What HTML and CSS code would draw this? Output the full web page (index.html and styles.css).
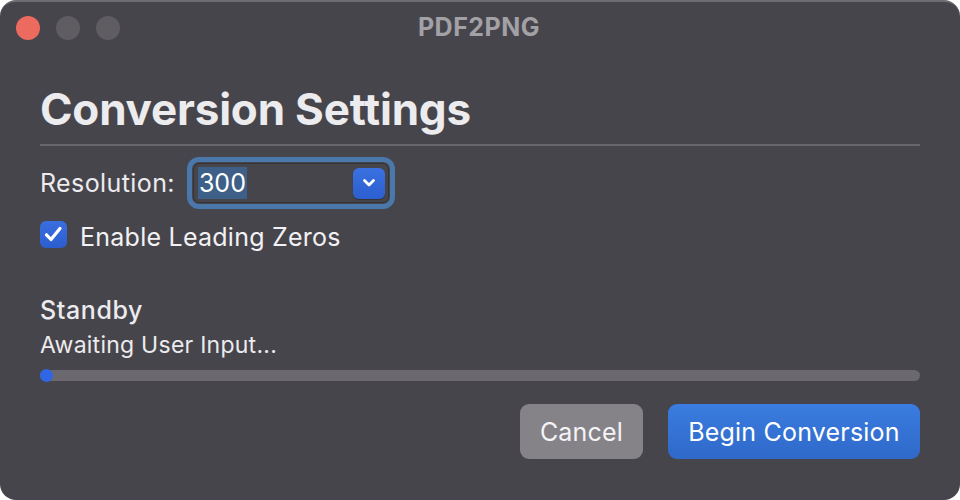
FILE: index.html
```html
<!DOCTYPE html>
<html>
<head>
<meta charset="utf-8">
<link rel="stylesheet" href="styles.css">
</head>
<body>
<div class="window">
  <div class="titlebar">
    <div class="lights">
      <span class="light red"></span>
      <span class="light gray"></span>
      <span class="light gray"></span>
    </div>
    <div class="title">PDF2PNG</div>
  </div>
  <div class="content">
    <h1 class="heading">Conversion Settings</h1>
    <div class="divider"></div>
    <div class="row res-row">
      <span class="label">Resolution:</span>
      <div class="combo-ring">
        <div class="combo">
          <span class="combo-value">300</span>
          <span class="combo-btn">
            <svg width="16" height="12" viewBox="0 0 16 12"><path d="M3.5 3.5 L8 8 L12.5 3.5" fill="none" stroke="#fff" stroke-width="2.8" stroke-linecap="round" stroke-linejoin="round"/></svg>
          </span>
        </div>
      </div>
    </div>
    <div class="row check-row">
      <span class="checkbox">
        <svg width="27" height="27" viewBox="0 0 27 27"><path d="M6.5 13.8 L11 18.5 L20 7.5" fill="none" stroke="#fff" stroke-width="3.2" stroke-linecap="round" stroke-linejoin="round"/></svg>
      </span>
      <span class="check-label">Enable Leading Zeros</span>
    </div>
    <div class="status-title">Standby</div>
    <div class="status-text">Awaiting User Input...</div>
    <div class="progress"><div class="progress-fill"></div></div>
    <div class="buttons">
      <button class="btn cancel">Cancel</button>
      <button class="btn primary">Begin Conversion</button>
    </div>
  </div>
</div>
</body>
</html>
```

FILE: styles.css
```css
html, body {
  margin: 0;
  padding: 0;
  background: #ffffff;
}
body {
  width: 960px;
  height: 500px;
  overflow: hidden;
  font-family: Inter, "Noto Sans", sans-serif;
}
.window {
  width: 960px;
  height: 500px;
  box-sizing: border-box;
  background: #47454c;
  border-radius: 16px;
  border-top: 2px solid #6e6c72;
  display: flex;
  flex-direction: column;
  color: #ecebee;
}
.titlebar {
  position: relative;
  height: 52px;
  display: flex;
  align-items: center;
  justify-content: center;
}
.lights {
  position: absolute;
  left: 16px;
  top: 14px;
  display: flex;
  gap: 16px;
}
.light {
  width: 24px;
  height: 24px;
  border-radius: 50%;
  display: block;
}
.light.red { background: #ec6a5e; }
.light.gray { background: #5f5d62; }
.title {
  font-size: 25px;
  font-weight: 700;
  color: #a2a1a6;
  letter-spacing: 0.5px;
  margin-left: -2px;
  margin-top: -2px;
}
.content {
  padding: 0 40px;
  display: flex;
  flex-direction: column;
}
.heading {
  margin: 31px 0 0 0;
  font-size: 44px;
  font-weight: 700;
  line-height: 48px;
  color: #ecebee;
  letter-spacing: -0.2px;
}
.divider {
  height: 2px;
  background: #69676d;
  margin-top: 11px;
}
.row {
  display: flex;
  align-items: center;
}
.res-row {
  margin-top: 11px;
}
.label {
  font-size: 25px;
  letter-spacing: 0.4px;
  color: #ecebee;
  margin-right: 12px;
}
.combo-ring {
  width: 208px;
  height: 52px;
  box-sizing: border-box;
  border: 5px solid #4a78aa;
  border-radius: 12px;
  padding: 1px;
}
.combo {
  height: 100%;
  box-sizing: border-box;
  border: 1px solid #353338;
  border-radius: 6px;
  background: #47454c;
  display: flex;
  align-items: center;
  justify-content: space-between;
  padding: 0 3px 0 4px;
}
.combo-value {
  font-size: 25px;
  color: #ffffff;
  background: #3e5f87;
  line-height: 32px;
  padding: 0 1px;
}
.combo-btn {
  width: 32px;
  height: 31px;
  border-radius: 6px;
  background: linear-gradient(#3a70e0, #2c5fd0);
  display: flex;
  align-items: center;
  justify-content: center;
  box-shadow: 0 1px 1px rgba(0,0,0,0.3);
}
.check-row {
  margin-top: 12px;
}
.checkbox {
  width: 27px;
  height: 27px;
  border-radius: 6px;
  background: linear-gradient(#3a6fe0, #2c5dcf);
  display: flex;
  align-items: center;
  justify-content: center;
}
.check-label {
  font-size: 25px;
  line-height: 27px;
  letter-spacing: 0.25px;
  margin-left: 13px;
  padding-top: 3px;
  margin-bottom: -3px;
  color: #f2f1f4;
}
.status-title {
  margin-top: 48px;
  font-size: 25px;
  font-weight: 500;
  line-height: 28px;
  letter-spacing: 0.6px;
  color: #ecebee;
}
.status-text {
  margin-top: 7px;
  font-size: 23px;
  line-height: 28px;
  letter-spacing: 0.25px;
  color: #ecebee;
}
.progress {
  margin-top: 11px;
  height: 11px;
  border-radius: 6px;
  background: #6b696f;
}
.progress-fill {
  width: 13px;
  height: 13px;
  border-radius: 50%;
  background: #2f66e4;
  margin-top: -1px;
}
.buttons {
  margin-top: 23px;
  display: flex;
  justify-content: flex-end;
  gap: 25px;
}
.btn {
  font-family: Inter, "Noto Sans", sans-serif;
  font-size: 25px;
  letter-spacing: 0.2px;
  height: 55px;
  border: none;
  border-radius: 9px;
  color: #ffffff;
  padding: 0;
}
.btn.cancel {
  width: 123px;
  background: #858388;
  color: #f4f3f6;
}
.btn.primary {
  width: 252px;
  background: linear-gradient(#3a7ce0, #2f69c9);
}
```
